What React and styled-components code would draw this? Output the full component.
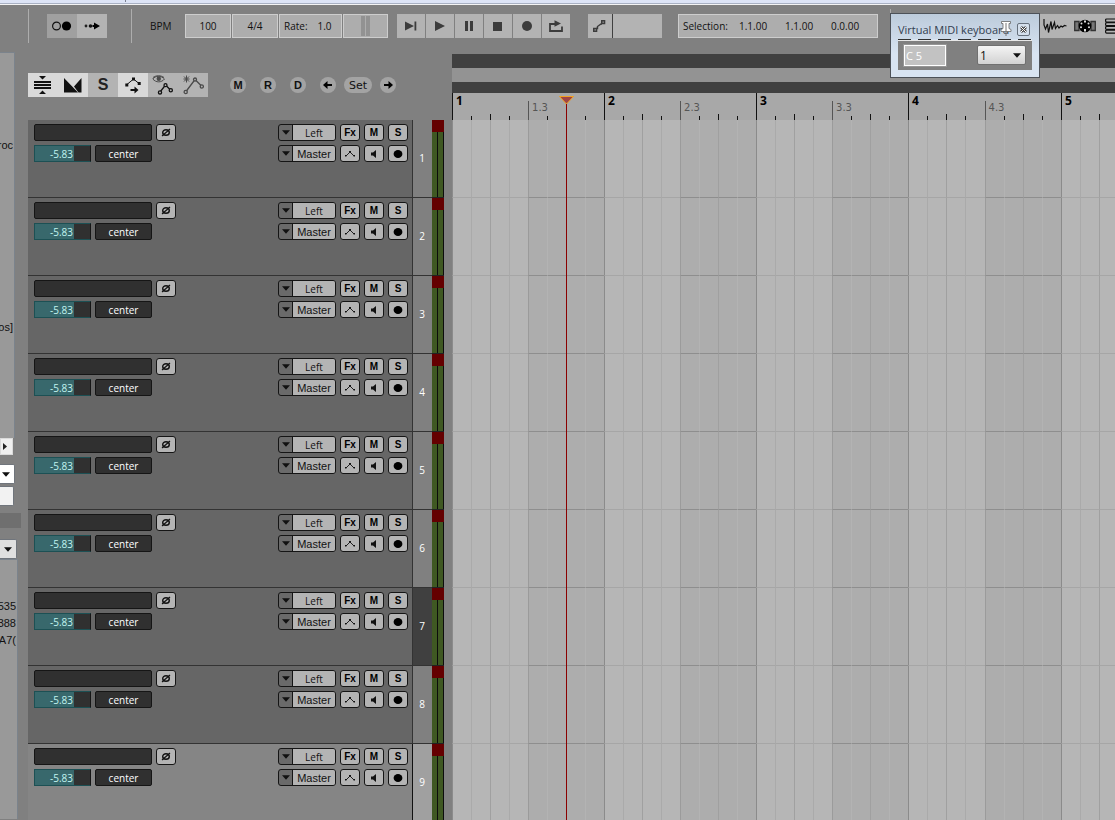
import React from "react";
import styled, { createGlobalStyle } from "styled-components";

const GlobalStyle = createGlobalStyle`
  * {
    box-sizing: border-box;
  }
  body {
    margin: 0;
    background: #808080;
    font-family: "Open Sans", "Noto Sans", sans-serif;
    font-size: 10px;
    color: #111111;
  }
  button, input, select {
    font: inherit;
    color: inherit;
    margin: 0;
    padding: 0;
    border: 0;
    border-radius: 0;
    outline: none;
  }
  svg {
    display: block;
  }
`;

const Window = styled.div`
  position: relative;
  height: 100vh;
  overflow: hidden;
  display: flex;
  flex-direction: column;
`;

const MenuEdge = styled.div`
  flex: none;
  height: 5px;
  background: #dde4f6;
  border-bottom: 1px solid #f4f4f4;
  box-shadow: inset 0 -1px 0 #a9b1c3;
`;

const MenuMark = styled.div`
  width: 1px;
  height: 2px;
  margin-left: 125px;
  background: #7a7f90;
`;

/* transport bar */

const Toolbar = styled.header`
  flex: none;
  display: flex;
  align-items: center;
  height: 47px;
  padding: 4px 0 9px 28px;
`;

const Divider = styled.div`
  flex: none;
  width: 1px;
  height: 34px;
  background: #adadad;
`;

const Group = styled.div`
  flex: none;
  display: flex;
  gap: ${(props) => props.$gap || 0}px;
  margin-left: ${(props) => props.$left || 0}px;
`;

const ToolButton = styled.button`
  flex: none;
  display: flex;
  align-items: center;
  justify-content: center;
  width: ${(props) => props.$width || 30}px;
  height: 24px;
  background: ${(props) => props.$tone || "#b3b3b3"};
`;

const BpmLabel = styled.label`
  flex: none;
  width: 53px;
  padding-left: 18px;
`;

const FieldInput = styled.input`
  width: 46px;
  height: 24px;
  border: 1px solid #cdcdcd;
  background: #adadad;
  text-align: center;
`;

const RateField = styled.label`
  display: flex;
  align-items: center;
  width: 63px;
  height: 24px;
  padding-left: 4px;
  border: 1px solid #cdcdcd;
  background: #adadad;

  input {
    width: 34px;
    background: none;
    text-align: center;
  }
`;

const RateKnob = styled.button`
  display: flex;
  align-items: center;
  justify-content: center;
  gap: 1px;
  width: 45px;
  height: 24px;
  border: 1px solid #cdcdcd;
  background: #adadad;

  span {
    width: 4px;
    height: 20px;
    background: #929292;
  }
`;

const AutomationMode = styled.div`
  width: 50px;
  height: 24px;
  border-left: 1px solid #404040;
  background: #b3b3b3;
`;

const Selection = styled.div`
  flex: none;
  display: flex;
  align-items: center;
  width: 200px;
  height: 24px;
  margin-left: 16px;
  padding-left: 4px;
  border: 1px solid #cdcdcd;
  background: #adadad;

  span {
    flex: none;
    width: 56px;
  }
  input {
    flex: 1;
    min-width: 0;
    background: none;
  }
`;

const IconBar = styled.div`
  flex: 1;
  display: flex;
  margin-left: 29px;
  padding-left: 120px;
  overflow: hidden;
  background: #b3b3b3;
`;

const Main = styled.div`
  flex: 1;
  min-height: 0;
  display: flex;
`;

/* browser strip at the far left */

const Sidebar = styled.aside`
  flex: none;
  width: 28px;
`;

const FileList = styled.div`
  width: ${(props) => props.$width}px;
  height: ${(props) => props.$height}px;
  padding-top: ${(props) => props.$top}px;
  padding-right: 1px;
  border: solid #7b838c;
  border-width: 1px 1px 0 0;
  background: #999999;
  overflow: hidden;
`;

const FileName = styled.div`
  display: flex;
  justify-content: flex-end;
  height: 17px;
  margin-bottom: ${(props) => props.$after || 0}px;
  overflow: hidden;
  font: 11px/17px "Liberation Sans", sans-serif;
  white-space: nowrap;
`;

const ScrollButton = styled.button`
  display: flex;
  align-items: center;
  justify-content: center;
  width: 13px;
  height: 17px;
  padding-right: 4px;
  border: 1px solid #dadada;
  background: #efefef;
`;

const ComboButton = styled.button`
  display: flex;
  align-items: center;
  justify-content: flex-end;
  width: ${(props) => props.$width}px;
  height: 20px;
  margin-top: ${(props) => props.$top}px;
  padding-right: 4px;
  border: 1px solid #70757c;
  border-left: 0;
  border-radius: 0 2px 2px 0;
  background: ${(props) => props.$tone || "#ffffff"};
`;

const DarkBar = styled.div`
  width: 21px;
  height: 15px;
  margin: 7px 0 11px;
  background: #6f6f6f;
`;

/* track panel */

const TrackPanel = styled.section`
  flex: none;
  width: 424px;
`;

const TrackTools = styled.div`
  display: flex;
  align-items: center;
  height: 68px;
  padding-bottom: 2px;
`;

const SoloText = styled.span`
  font: bold 16px/24px "Liberation Sans", sans-serif;
  color: #222222;
`;

const RoundButton = styled.button`
  display: flex;
  align-items: center;
  justify-content: center;
  width: ${(props) => (props.$wide ? 28 : 16)}px;
  height: 16px;
  border-radius: 8px;
  background: #a3a3a3;
  font-family: ${(props) =>
    props.$wide ? `"DejaVu Sans", sans-serif` : `"Liberation Sans", sans-serif`};
  font-size: 11px;
  font-weight: ${(props) => (props.$wide ? 400 : 700)};
`;

const TrackRow = styled.div`
  display: flex;
  height: 78px;
  padding-right: 8px;
`;

const TrackBody = styled.div`
  flex: 1;
  display: flex;
  justify-content: space-between;
  padding: 4px 4px 0 6px;
  border-bottom: 1px solid #333333;
  background: ${(props) => (props.$light ? "#858585" : "#666666")};
`;

const Controls = styled.div`
  display: flex;
  flex-direction: column;
  gap: 4px;
`;

const ControlLine = styled.div`
  display: flex;
  gap: 4px;
`;

const DarkInput = styled.input`
  width: ${(props) => props.$width}px;
  height: 17px;
  border: 1px solid #151515;
  border-radius: 2px;
  background: #303030;
  color: #ffffff;
  text-align: center;
`;

const VolumeInput = styled(DarkInput)`
  padding-right: 2px;
  border-color: #1c5054 #151515 #1c5054 #1c5054;
  border-radius: 0;
  background: linear-gradient(to right, #38686c 39px, #303030 39px);
  color: #c2f4f0;
`;

const SmallButton = styled.button`
  display: flex;
  align-items: center;
  justify-content: center;
  width: 20px;
  height: 17px;
  border: 1px solid #151515;
  border-radius: 3px;
  background: #b4b4b4;
  font: bold 10px/15px "Liberation Sans", sans-serif;
  color: #000000;
`;

const RouteLabel = styled.label`
  display: flex;
  width: 58px;
  height: 17px;
  border: 1px solid #151515;
  border-radius: 3px;
  background: #6a6a6a;

  svg {
    flex: none;
    margin: 5px 2px 0 3px;
  }
  select {
    flex: 1;
    min-width: 0;
    appearance: none;
    border-left: 1px solid #151515;
    border-radius: 0 2px 2px 0;
    background: #b4b4b4;
    text-align: center;
    text-align-last: center;
    font-family: ${(props) =>
      props.$large ? `"Liberation Sans", sans-serif` : "inherit"};
    font-size: ${(props) => (props.$large ? 11 : 10)}px;
  }
`;

const TrackNumber = styled.div`
  width: 20px;
  padding-right: 1px;
  border-left: 1px solid ${(props) => (props.$light ? "#111111" : "#333333")};
  border-bottom: 1px solid #333333;
  background: ${(props) =>
    props.$selected ? "#404040" : props.$light ? "#a0a0a0" : "#808080"};
  color: #ffffff;
  line-height: 77px;
  text-align: center;
`;

const Meter = styled.div`
  width: 12px;
  display: flex;
  flex-direction: column;
  border-bottom: 1px solid #222222;
`;

const MeterPeak = styled.div`
  height: 12px;
  background: #640000;
`;

const MeterBars = styled.div`
  flex: 1;
  display: flex;

  span {
    flex: 1;
    border-right: 1px solid #0c0c0c;
    background: #3f5822;
  }
`;

/* arrange view */

const Timeline = styled.section`
  position: relative;
  flex: 1;
  min-width: 0;
  display: flex;
  flex-direction: column;
  margin-top: 2px;
  overflow: hidden;
`;

const Strip = styled.div`
  flex: none;
  height: ${(props) => props.$height}px;
  background: ${(props) => props.$tone};
`;

const BarLine = styled.div`
  flex: none;
  display: flex;
  height: ${(props) => props.$height}px;
`;

const RulerBar = styled.div`
  flex: none;
  display: flex;
  align-items: flex-end;
  width: ${(props) => props.$width}px;
  height: 27px;
  background: #a8a8a8;
`;

const Tick = styled.div`
  flex: 1;
  width: 0;
  height: ${(props) => props.$height}px;
  border-left: 1px solid ${(props) => props.$tone || "#111111"};
  white-space: nowrap;
`;

const BarNumber = styled.span`
  display: block;
  padding-left: 3px;
  font: bold 12px/16px "Open Sans", sans-serif;
  color: #000000;
`;

const BeatNumber = styled.span`
  display: block;
  padding-left: 3px;
  font: 10px/13px "DejaVu Sans", sans-serif;
  color: #555555;
`;

const GridBar = styled.div`
  flex: none;
  display: flex;
  width: ${(props) => props.$width}px;
`;

const GridCell = styled.div`
  flex: 1;
  border-left: 1px solid ${(props) => props.$line};
  border-bottom: 1px solid ${(props) => (props.$dark ? "#8e8e8e" : "#a6a6a6")};
  background: ${(props) => (props.$dark ? "#adadad" : "#b6b6b6")};
`;

const Playhead = styled.div`
  position: absolute;
  top: 41px;
  bottom: 0;
  left: 106px;
  width: 17px;

  &::after {
    content: "";
    position: absolute;
    top: 9px;
    bottom: 0;
    left: 8px;
    width: 1px;
    background: #8b0000;
  }
`;

/* floating keyboard window */

const Floating = styled.div`
  position: absolute;
  top: 13px;
  left: 890px;
  width: 150px;
  padding: 1px 7px 7px;
  border: 1px solid #4c5158;
  background: linear-gradient(#bccbdb, #d8e4f2 40px);
`;

const FloatingTitle = styled.div`
  display: flex;
  align-items: center;
  justify-content: space-between;
  height: 24px;
  padding-top: 4px;
  font-size: 11px;
  color: #33404f;
  white-space: nowrap;
`;

const CloseButton = styled.button`
  flex: none;
  display: flex;
  align-items: center;
  justify-content: center;
  width: 13px;
  height: 13px;
  margin-right: 2px;
  border: 1px solid #66707c;
  border-radius: 2px;
  background: #d4dfec;
`;

const PinButton = styled.button`
  position: absolute;
  top: 7px;
  right: 27px;
  background: none;
`;

const KeyStrip = styled.div`
  height: 2px;
  border-bottom: 1px solid #e8e8e8;
  background: repeating-linear-gradient(to right, #303030 0 13px, #d8e4f2 13px 20px);
`;

const FloatingBody = styled.div`
  display: flex;
  align-items: flex-start;
  justify-content: space-between;
  height: 29px;
  padding: 4px 6px 0;
  background: #808080;
`;

const NoteInput = styled.input`
  width: 42px;
  height: 21px;
  padding-left: 1px;
  border: 1px solid #ffffff;
  outline: 1px solid #969696;
  background: #c2c2c2;
  color: #ffffff;
  font-size: 11px;
`;

const ChannelSelect = styled.label`
  display: flex;
  align-items: center;
  width: 49px;
  height: 20px;
  padding-right: 4px;
  border: 1px solid #707070;
  border-radius: 2px;
  background: linear-gradient(#f4f4f4, #d2d2d2);

  select {
    flex: 1;
    min-width: 0;
    padding-left: 2px;
    appearance: none;
    background: none;
    font-size: 12px;
  }
`;

const Arrow = ({ size = 9 }) => (
  <svg width={size} height="5" viewBox="0 0 9 5">
    <path d="M0 0h9L4.500 5z" fill="#111" />
  </svg>
);

const icons = {
  metronome: (
    <svg width="22" height="12" viewBox="0 0 22 12">
      <circle cx="5.500" cy="6" r="3.900" fill="none" stroke="#111" strokeWidth="1.200" />
      <circle cx="15.500" cy="6" r="4.600" fill="#000" />
    </svg>
  ),
  follow: (
    <svg width="16" height="10" viewBox="0 0 16 10">
      <circle cx="2" cy="5" r="1.400" fill="#222" />
      <circle cx="6.500" cy="5" r="1.800" fill="#111" />
      <path d="M10 1.500L16 5l-6 3.500V6H8.500V4H10z" fill="#000" />
    </svg>
  ),
  end: (
    <svg width="12" height="10" viewBox="0 0 12 10">
      <path d="M0 .5L9 5 0 9.500zM9.500 .5h1.800v9H9.500z" fill="#3c3c3c" />
    </svg>
  ),
  play: (
    <svg width="10" height="10" viewBox="0 0 10 10">
      <path d="M0 0l10 5-10 5z" fill="#3c3c3c" />
    </svg>
  ),
  pause: (
    <svg width="8" height="10" viewBox="0 0 8 10">
      <path d="M0 0h3v10H0zM5 0h3v10H5z" fill="#3c3c3c" />
    </svg>
  ),
  stop: (
    <svg width="10" height="9" viewBox="0 0 10 9">
      <path d="M0 0h9v9H0z" fill="#3c3c3c" />
    </svg>
  ),
  record: (
    <svg width="10" height="10" viewBox="0 0 10 10">
      <circle cx="5" cy="5" r="5" fill="#3c3c3c" />
    </svg>
  ),
  loop: (
    <svg width="14" height="12" viewBox="0 0 14 12">
      <path
        d="M3.500 4H1v7h12V6.500M2 4h5"
        fill="none"
        stroke="#3c3c3c"
        strokeWidth="1.800"
      />
      <path d="M5.500 .2L12 3.500 5.500 6.800z" fill="#3c3c3c" />
    </svg>
  ),
  automation: (
    <svg width="14" height="12" viewBox="0 0 14 12" fill="none" stroke="#3c3c3c">
      <path d="M8.800 .8h2.700v2.700H8.800zM.8 8.500h2.700v2.700H.8z" strokeWidth="1.600" />
      <path d="M3 8.500h1.500V6.500L8 4h1" strokeWidth="1.400" />
    </svg>
  ),
  wave: (
    <svg width="24" height="16" viewBox="0 0 24 16">
      <path
        d="M1 1v6l1.500 4 2-5 1 8.500 2.500-11 1 8 2.500-7 1 6 2-3 1.500 2.500 2-2 1.500 1 2-1.500 2 .5"
        fill="none"
        stroke="#111"
        strokeWidth="1.200"
      />
    </svg>
  ),
  midi: (
    <svg width="22" height="14" viewBox="0 0 22 14">
      <path
        d="M5 2.500H.7v9H5zM17 2.500h4.300v9H17z"
        fill="#777"
        stroke="#333"
        strokeWidth="1.300"
      />
      <circle cx="11" cy="7" r="6.300" fill="#000" />
      <g fill="#ddd">
        <path d="M10 1.500h2v2h-2z" />
        <circle cx="7.500" cy="4.500" r="1" />
        <circle cx="14.500" cy="4.500" r="1" />
        <circle cx="7" cy="8.300" r="1" />
        <circle cx="15" cy="8.300" r="1" />
        <path d="M10 10h2v2.500h-2z" />
      </g>
    </svg>
  ),
  stack: (
    <svg width="20" height="16" viewBox="0 0 20 16">
      <g fill="none" stroke="#111" strokeWidth="1.200">
        <rect x=".6" y="1" width="18.800" height="3" rx="1" />
        <rect x=".6" y="4.700" width="18.800" height="3" rx="1" />
        <rect x=".6" y="8.400" width="18.800" height="3" rx="1" />
        <rect x=".6" y="12.100" width="18.800" height="3" rx="1" />
      </g>
    </svg>
  ),
  lanes: (
    <svg width="18" height="18" viewBox="0 0 18 18">
      <path
        d="M5 0h7L8.500 3.500zM0 5h17v2H0zM0 8h17v2H0zM0 11h17v2H0zM5 18h7l-3.500-3.500z"
        fill="#111"
      />
    </svg>
  ),
  fade: (
    <svg width="18" height="15" viewBox="0 0 18 15">
      <path d="M0 0l14 14.500H0zM17.500 0v14.500H14.500L10 8.500z" fill="#111" />
    </svg>
  ),
  envelopeMove: (
    <svg width="16" height="17" viewBox="0 0 16 17">
      <path d="M2 7.500L8.500 2 14 6.500" fill="none" stroke="#111" />
      <path
        d="M7 .5h3v3H7zM12.700 5h3v3h-3zM.3 6.500h3v3h-3zM9.500 9.500l4 3.500-4 3.500v-2.500h-4v-2h4z"
        fill="#111"
      />
    </svg>
  ),
  envelopeShow: (
    <svg width="22" height="20" viewBox="0 0 22 20" fill="none">
      <path
        d="M.8 4C3 .7 9 .2 12.500 4 9.500 7.800 4 7.800.8 4zM1 2.500C4 .2 9 .2 12 2.500"
        stroke="#4a4a4a"
      />
      <circle cx="6.800" cy="3.800" r="2.200" fill="#4a4a4a" />
      <path d="M8 17l5.500-7L18.500 15" stroke="#111" strokeWidth="1.300" />
      <g fill="#b3b3b3" stroke="#111" strokeWidth="1.300">
        <circle cx="8" cy="17.400" r="1.600" />
        <circle cx="13.500" cy="10.200" r="1.500" />
        <circle cx="18.800" cy="15.300" r="1.600" />
      </g>
    </svg>
  ),
  envelopeNew: (
    <svg width="22" height="20" viewBox="0 0 22 20" fill="none" stroke="#4a4a4a">
      <path d="M4.500 .5v7M1.500 4h6M2 1.500l5 5M7 1.500l-5 5" />
      <path d="M4 16.500l9-12L19.500 11" strokeWidth="1.300" />
      <g fill="#b3b3b3" strokeWidth="1.300">
        <circle cx="3.700" cy="17" r="1.600" />
        <circle cx="13" cy="4.500" r="1.500" />
        <circle cx="19.800" cy="11.500" r="1.600" />
      </g>
    </svg>
  ),
  left: (
    <svg width="10" height="8" viewBox="0 0 10 8">
      <path d="M0 4l4.500-4v2.900H9v2.200H4.500V8z" fill="#000" />
    </svg>
  ),
  right: (
    <svg width="10" height="8" viewBox="0 0 10 8">
      <path d="M10 4L5.500 0v2.900H1v2.200h4.500V8z" fill="#000" />
    </svg>
  ),
  phase: (
    <svg width="10" height="9" viewBox="0 0 10 9" fill="none" stroke="#111">
      <ellipse cx="5" cy="4.500" rx="3.300" ry="2.800" strokeWidth="1.400" />
      <path d="M1 8L9 1" strokeWidth="1.200" />
    </svg>
  ),
  envelope: (
    <svg width="12" height="8" viewBox="0 0 12 8">
      <path d="M2 6l4-4 4 4" fill="none" stroke="#222" />
      <path d="M5 1h2v1.500H5zM1 5h1.500v1.500H1zM9.500 5H11v1.500H9.500z" fill="#111" />
    </svg>
  ),
  speaker: (
    <svg width="8" height="8" viewBox="0 0 8 8">
      <path d="M1 2.500h2L6 0v8L3 5.500H1z" fill="#111" />
    </svg>
  ),
  arm: (
    <svg width="10" height="8" viewBox="0 0 10 8">
      <ellipse cx="5" cy="4" rx="4.400" ry="4" fill="#000" />
    </svg>
  ),
  pin: (
    <svg width="12" height="16" viewBox="0 0 12 16">
      <path
        d="M1.500 .5h9v2H9v5l2 1v2H1v-2l2-1v-5H1.500z"
        fill="#fff"
        stroke="#666"
        strokeWidth=".8"
      />
      <path d="M6 2v13" stroke="#777" />
    </svg>
  ),
  close: (
    <svg width="7" height="7" viewBox="0 0 7 7">
      <path d="M1 1l5 5M6 1L1 6" stroke="#444" strokeWidth="2.600" />
      <path d="M1 1l5 5M6 1L1 6" stroke="#fff" />
    </svg>
  ),
};

const transport = ["end", "play", "pause", "stop", "record", "loop"];

const trackTools = [
  { name: "lanes", tone: "#d9d9d9" },
  { name: "fade", tone: "#d9d9d9" },
  { name: "solo" },
  { name: "envelopeMove", tone: "#d9d9d9" },
  { name: "envelopeShow" },
  { name: "envelopeNew" },
];

const tracks = [1, 2, 3, 4, 5, 6, 7, 8, 9];
const bars = [152, 152, 152, 153, 152, 152, 152, 153, 152, 152];
const eighths = [0, 1, 2, 3, 4, 5, 6, 7];

const lineTone = (i) => {
  if (i === 0) return "#8b8b8b";
  if (i === 4) return "#9b9b9b";
  if (i === 2 || i === 6) return "#a0a0a0";
  return i < 4 ? "#aaaaaa" : "#b3b3b3";
};

const TransportBar = () => (
  <Toolbar>
    <Divider />
    <Group $left={18}>
      <ToolButton $tone="#a0a0a0" aria-label="Metronome">
        {icons.metronome}
      </ToolButton>
      <ToolButton aria-label="Follow">{icons.follow}</ToolButton>
    </Group>
    <Group $left={24}>
      <Divider />
    </Group>
    <BpmLabel htmlFor="bpm">BPM</BpmLabel>
    <Group $gap={1}>
      <FieldInput id="bpm" defaultValue="100" />
      <FieldInput aria-label="Time signature" defaultValue="4/4" />
      <RateField>
        Rate:
        <input defaultValue="1.0" />
      </RateField>
      <RateKnob aria-label="Playback rate">
        <span />
        <span />
      </RateKnob>
    </Group>
    <Group $gap={1} $left={9}>
      {transport.map((name) => (
        <ToolButton key={name} $width={28} aria-label={name}>
          {icons[name]}
        </ToolButton>
      ))}
    </Group>
    <Group $left={18}>
      <ToolButton $width={24} aria-label="Automation">
        {icons.automation}
      </ToolButton>
      <AutomationMode />
    </Group>
    <Selection>
      <span>Selection:</span>
      <input aria-label="Selection start" defaultValue="1.1.00" />
      <input aria-label="Selection end" defaultValue="1.1.00" />
      <input aria-label="Selection length" defaultValue="0.0.00" />
    </Selection>
    <Group $left={12}>
      <Divider />
    </Group>
    <IconBar>
      <ToolButton aria-label="Audio">{icons.wave}</ToolButton>
      <ToolButton aria-label="MIDI">{icons.midi}</ToolButton>
      <ToolButton aria-label="Mixer">{icons.stack}</ToolButton>
    </IconBar>
  </Toolbar>
);

const Track = ({ number }) => {
  const light = number === 9;
  return (
    <TrackRow>
      <TrackBody $light={light}>
        <Controls>
          <ControlLine>
            <DarkInput $width={118} aria-label={`Track ${number} name`} />
            <SmallButton aria-label="Phase">{icons.phase}</SmallButton>
          </ControlLine>
          <ControlLine>
            <VolumeInput $width={57} aria-label="Volume" defaultValue="-5.83" />
            <DarkInput $width={57} aria-label="Pan" defaultValue="center" />
          </ControlLine>
        </Controls>
        <Controls>
          <ControlLine>
            <RouteLabel>
              <Arrow size={8} />
              <select aria-label="Input">
                <option>Left</option>
              </select>
            </RouteLabel>
            <SmallButton>Fx</SmallButton>
            <SmallButton>M</SmallButton>
            <SmallButton>S</SmallButton>
          </ControlLine>
          <ControlLine>
            <RouteLabel $large>
              <Arrow size={8} />
              <select aria-label="Output">
                <option>Master</option>
              </select>
            </RouteLabel>
            <SmallButton aria-label="Envelope">{icons.envelope}</SmallButton>
            <SmallButton aria-label="Monitor">{icons.speaker}</SmallButton>
            <SmallButton aria-label="Arm">{icons.arm}</SmallButton>
          </ControlLine>
        </Controls>
      </TrackBody>
      <TrackNumber $light={light} $selected={number === 7}>
        {number}
      </TrackNumber>
      <Meter>
        <MeterPeak />
        <MeterBars>
          <span />
          <span />
        </MeterBars>
      </Meter>
    </TrackRow>
  );
};

const RulerTick = ({ bar, index }) => {
  if (index === 0) {
    return (
      <Tick $height={27}>
        <BarNumber>{bar}</BarNumber>
      </Tick>
    );
  }
  if (index === 4) {
    return (
      <Tick $height={19} $tone="#555555">
        <BeatNumber>{bar}.3</BeatNumber>
      </Tick>
    );
  }
  return <Tick $height={index % 2 ? 4 : 6} />;
};

const Arrange = () => (
  <Timeline>
    <Strip $height={14} $tone="#404040" />
    <Strip $height={14} $tone="#939393" />
    <Strip $height={11} $tone="#404040" />
    <BarLine $height={27}>
      {bars.map((width, bar) => (
        <RulerBar key={bar} $width={width}>
          {eighths.map((i) => (
            <RulerTick key={i} bar={bar + 1} index={i} />
          ))}
        </RulerBar>
      ))}
    </BarLine>
    {tracks.map((number) => (
      <BarLine key={number} $height={78}>
        {bars.map((width, bar) => (
          <GridBar key={bar} $width={width}>
            {eighths.map((i) => (
              <GridCell key={i} $dark={i > 3} $line={lineTone(i)} />
            ))}
          </GridBar>
        ))}
      </BarLine>
    ))}
    <Playhead>
      <svg width="17" height="10" viewBox="0 0 17 10">
        <path d="M1.500 1.500h14l-7 7.500z" fill="#a04444" stroke="#f0a020" />
      </svg>
    </Playhead>
  </Timeline>
);

const KeyboardWindow = () => (
  <Floating>
    <FloatingTitle>
      Virtual MIDI keyboard
      <CloseButton aria-label="Close">{icons.close}</CloseButton>
    </FloatingTitle>
    <PinButton aria-label="Pin">{icons.pin}</PinButton>
    <KeyStrip />
    <FloatingBody>
      <NoteInput aria-label="Note" defaultValue="C 5" />
      <ChannelSelect>
        <select aria-label="Channel">
          <option>1</option>
        </select>
        <Arrow size={8} />
      </ChannelSelect>
    </FloatingBody>
  </Floating>
);

const App = () => {
  return (
    <Window>
      <GlobalStyle />
      <MenuEdge>
        <MenuMark />
      </MenuEdge>
      <TransportBar />
      <Main>
        <Sidebar>
          <FileList $width={15} $height={386} $top={84}>
            <FileName $after={165}>roc</FileName>
            <FileName>os]</FileName>
          </FileList>
          <ScrollButton aria-label="Scroll right">
            <svg width="4" height="7" viewBox="0 0 4 7">
              <path d="M0 0l4 3.500L0 7z" fill="#222" />
            </svg>
          </ScrollButton>
          <ComboButton $width={15} $top={9} aria-label="Filter">
            <Arrow size={8} />
          </ComboButton>
          <ComboButton $width={14} $top={2} $tone="#f2f2f2" aria-label="Search" />
          <DarkBar />
          <ComboButton $width={17} $top={0} $tone="#e0e0e0" aria-label="Type">
            <Arrow size={8} />
          </ComboButton>
          <FileList $width={18} $height={260} $top={38}>
            <FileName>535</FileName>
            <FileName>5388</FileName>
            <FileName>3A7(</FileName>
          </FileList>
        </Sidebar>
        <TrackPanel>
          <TrackTools>
            {trackTools.map((tool) => (
              <ToolButton key={tool.name} $tone={tool.tone} aria-label={tool.name}>
                {tool.name === "solo" ? <SoloText>S</SoloText> : icons[tool.name]}
              </ToolButton>
            ))}
            <Group $gap={14} $left={22}>
              <RoundButton>M</RoundButton>
              <RoundButton>R</RoundButton>
              <RoundButton>D</RoundButton>
              <RoundButton aria-label="Previous">{icons.left}</RoundButton>
            </Group>
            <Group $gap={8} $left={8}>
              <RoundButton $wide>Set</RoundButton>
              <RoundButton aria-label="Next">{icons.right}</RoundButton>
            </Group>
          </TrackTools>
          {tracks.map((number) => (
            <Track key={number} number={number} />
          ))}
        </TrackPanel>
        <Arrange />
      </Main>
      <KeyboardWindow />
    </Window>
  );
};

export default App;
